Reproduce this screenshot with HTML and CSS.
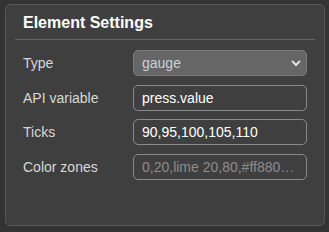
FILE: index.html
```html
<!DOCTYPE html>
<html lang="en">
<head>
    <meta charset="UTF-8">
    <meta name="viewport" content="width=device-width, initial-scale=1.0">
    <title>Element Settings</title>
    <link rel="stylesheet" href="styles.css">
</head>
<body>
    <div class="panel">
        <h3 class="panel-title">Element Settings</h3>
        <div class="settings">
            <label class="field-label">Type</label>
            <div class="select-wrap">
                <select class="field select">
                    <option>gauge</option>
                </select>
                <svg class="chevron" width="10" height="7" viewBox="0 0 10 7">
                    <path d="M1.5 1.5 L5 5 L8.5 1.5" fill="none" stroke="#e6e6e6" stroke-width="1.8" stroke-linecap="round" stroke-linejoin="round"/>
                </svg>
            </div>

            <label class="field-label">API variable</label>
            <input class="field" type="text" value="press.value">

            <label class="field-label">Ticks</label>
            <input class="field" type="text" value="90,95,100,105,110">

            <label class="field-label">Color zones</label>
            <input class="field" type="text" placeholder="0,20,lime 20,80,#ff8800 80,100,red">
        </div>
    </div>
</body>
</html>
```

FILE: styles.css
```css
body {
    margin: 0;
    background-color: #333333;
    font-family: "Liberation Sans", Arial, sans-serif;
    color: #dddddd;
}
.panel {
    margin: 4px 0 0 5px;
    width: 320px;
    height: 222px;
    box-sizing: border-box;
    padding: 0 9px;
    background-color: #3f3f3f;
    border: 1px solid #575757;
    border-radius: 5px;
}
.panel-title {
    margin: 0;
    padding: 8px 8px 6px;
    line-height: 20px;
    font-size: 16px;
    font-weight: bold;
    color: #ffffff;
    border-bottom: 1px solid #666666;
}
.settings {
    display: grid;
    grid-template-columns: 110px 1fr;
    row-gap: 8.5px;
    align-items: center;
    padding: 10px 8px 0;
}
.field-label {
    font-size: 14px;
    color: #d8d8d8;
}
.field {
    width: 100%;
    height: 26px;
    box-sizing: border-box;
    padding: 0 8px;
    font-family: "Liberation Sans", Arial, sans-serif;
    font-size: 14px;
    color: #ffffff;
    background-color: transparent;
    border: 1px solid #8a8a8a;
    border-radius: 5px;
    outline: none;
    text-overflow: ellipsis;
}
.field::placeholder {
    color: #8c8c8c;
}
.select-wrap {
    position: relative;
}
.select {
    appearance: none;
    -webkit-appearance: none;
    background-color: #666666;
    border-color: #7a7a7a;
    color: #d0d0d0;
}
.chevron {
    position: absolute;
    right: 6px;
    top: 10px;
    pointer-events: none;
}
```
